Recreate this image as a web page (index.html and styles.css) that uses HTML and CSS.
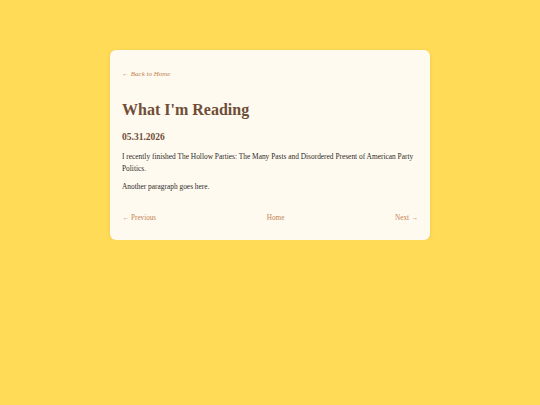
FILE: index.html
```html
<!DOCTYPE html>
<html lang="en">
<head>
<meta charset="utf-8">
<title>What I'm Reading</title>
<link rel="stylesheet" href="styles.css">
</head>
<body>
<main class="card">
  <a class="back" href="#">← Back to Home</a>
  <h1 class="title">What I'm Reading</h1>
  <h2 class="date">05.31.2026</h2>
  <p class="para">I recently finished The Hollow Parties: The Many Pasts and Disordered Present of American Party Politics.</p>
  <p class="para second">Another paragraph goes here.</p>
  <nav class="pager">
    <a href="#">← Previous</a>
    <a href="#">Home</a>
    <a href="#">Next →</a>
  </nav>
</main>
</body>
</html>
```
FILE: styles.css
```css
html, body {
  margin: 0;
  padding: 0;
}
body {
  background: #ffdb58;
  font-family: "Liberation Serif", "Times New Roman", serif;
  color: #2e2a28;
  padding-top: 50px;
}
.card {
  width: 296px;
  margin: 0 auto;
  background: #fffaf0;
  border-radius: 6px;
  padding: 19px 12px 17px;
  box-shadow: 0 1px 4px rgba(0,0,0,0.08);
  display: flex;
  flex-direction: column;
}
a {
  color: #bf8450;
  text-decoration: none;
}
.back {
  font-size: 7px;
  line-height: 10px;
  font-style: italic;
}
.title {
  margin: 21px 0 0;
  font-size: 16px;
  line-height: 20px;
  color: #6f4e37;
  font-weight: bold;
}
.date {
  margin: 11px 0 0;
  font-size: 9.5px;
  line-height: 12px;
  color: #6f4e37;
  font-weight: bold;
}
.para {
  margin: 8px 0 0;
  font-size: 7.4px;
  line-height: 12px;
}
.para.second {
  margin-top: 6px;
}
.pager {
  margin-top: 20px;
  display: flex;
  justify-content: space-between;
  font-size: 7.2px;
  line-height: 10px;
}
```
